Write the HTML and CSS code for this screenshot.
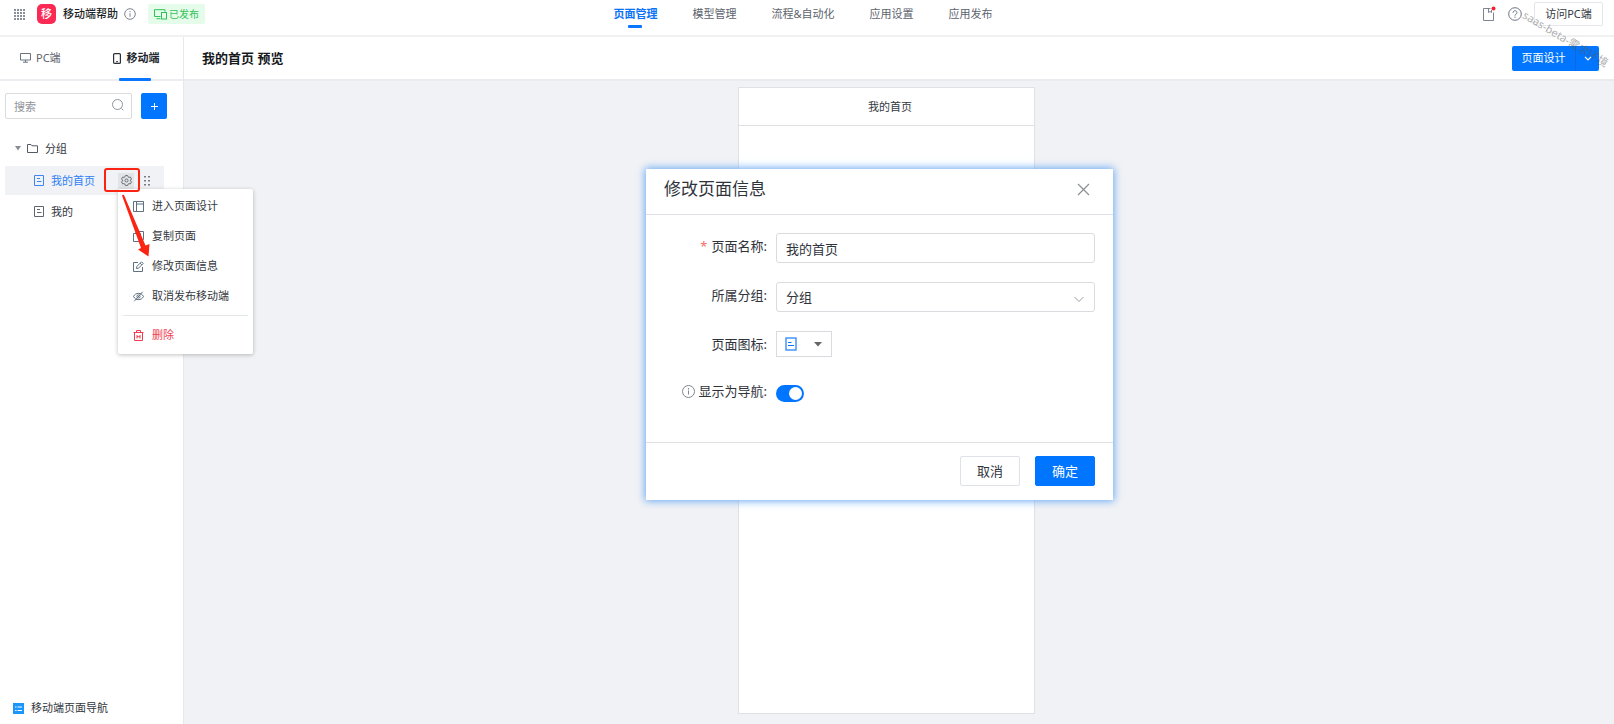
FILE: index.html
```html
<!DOCTYPE html>
<html lang="zh-CN">
<head>
<meta charset="utf-8">
<title>移动端帮助</title>
<link rel="stylesheet" href="styles.css">
</head>
<body>
<div class="app">
  <header class="topbar">
    <div class="brand">
      <svg class="apps" width="11" height="11" viewBox="0 0 11 11" fill="#6b7380"><path d="M0 0h2v2H0zM3 0h2v2H3zM6 0h2v2H6zM9 0h2v2H9zM0 3h2v2H0zM3 3h2v2H3zM6 3h2v2H6zM9 3h2v2H9zM0 6h2v2H0zM3 6h2v2H3zM6 6h2v2H6zM9 6h2v2H9zM0 9h2v2H0zM3 9h2v2H3zM6 9h2v2H6zM9 9h2v2H9z" opacity=".8"/></svg>
      <span class="logo">移</span>
      <span class="brand-name">移动端帮助</span>
      <svg class="info" width="12" height="12" viewBox="0 0 12 12" fill="none" stroke="#7d8592"><circle cx="6" cy="6" r="5.3"/><path d="M6 5.2v3.6M6 3v1.2"/></svg>
      <span class="badge"><svg width="13" height="11" viewBox="0 0 13 11" fill="none" stroke="#2fc25b"><path d="M6.5 7.5h-6v-6.800h10.500v2M2.500 9.700h4"/><rect x="7.500" y="3.500" width="5" height="6.500"/></svg>已发布</span>
    </div>
    <nav class="mainnav">
      <a class="current" href="#">页面管理</a>
      <a href="#">模型管理</a>
      <a href="#">流程&amp;自动化</a>
      <a href="#">应用设置</a>
      <a href="#">应用发布</a>
    </nav>
    <div class="tools">
      <svg width="14" height="16" viewBox="0 0 14 16" fill="none" stroke="#7d8592"><path d="M8.500 2.500h-7v12h10v-8"/><path d="M6.500 2.500v4l1.500-1 1.500 1V4"/><circle cx="11.500" cy="2.500" r="2" fill="#f5222d" stroke="none"/></svg>
      <svg width="14" height="14" viewBox="0 0 14 14" fill="none" stroke="#6b7684"><circle cx="7" cy="7" r="6.300"/><path d="M5 5.800c0-2.700 4-2.700 4-.2C9 7 7 6.900 7 8.600M7 9.600v1.200"/></svg>
      <button class="visit" type="button">访问PC端</button>
    </div>
  </header>

  <div class="body">
    <aside class="sidebar">
      <div class="tabs">
        <button class="tab" type="button"><svg width="11" height="10" viewBox="0 0 11 10" fill="none" stroke="#6b7380"><path d="M.5.500h10v6.500H.5zM5.500 7v2M3 9.200h5"/></svg>PC端</button>
        <button class="tab active" type="button"><svg width="8" height="11" viewBox="0 0 8 11" fill="none" stroke="#2b2f36"><rect x=".6" y=".6" width="6.800" height="9.800" rx="1" stroke-width="1.200"/><path d="M3 8.700h2"/></svg>移动端</button>
      </div>
      <div class="searchrow">
        <div class="search">
          <input type="search" aria-label="搜索" placeholder="搜索">
          <svg width="12" height="12" viewBox="0 0 12 12" fill="none" stroke="#8f949b"><circle cx="5.500" cy="5.500" r="5"/><path d="M9.500 9.500l1.800 1.800"/></svg>
        </div>
        <button class="add" type="button" aria-label="新增"><svg width="9" height="9" viewBox="0 0 9 9" stroke="#fff"><path d="M4.500 1v7M1 4.500h7"/></svg></button>
      </div>
      <ul class="tree">
        <li class="group">
          <svg width="6" height="5" viewBox="0 0 6 5" fill="#888d94"><path d="M0 0h6L3 4.500z"/></svg>
          <svg class="folder" width="11" height="9" viewBox="0 0 11 9" fill="none" stroke="#555b65"><path d="M.5 8.500v-8h3.500l1 1.300h5.500v6.700z"/></svg>
          分组
        </li>
        <li class="item selected">
          <svg width="10" height="11" viewBox="0 0 10 11" fill="none" stroke="#3d87f5"><path d="M.5.500h9v10h-9zM3 3.500h3M3 6.500h4.500"/></svg>
          <a href="#">我的首页</a>
          <button class="gear" type="button" aria-label="设置">
            <svg width="11" height="11" viewBox="0 0 12 12" fill="none" stroke="#5f6670"><path d="M4.800.600h2.400l.5 1.400 1 .6 1.500-.3 1.200 2.100-1 1.100v1l1 1.100-1.200 2.100-1.500-.3-1 .6-.5 1.400H4.800L4.300 10l-1-.6-1.500.3L.6 7.600l1-1.100v-1l-1-1.100 1.200-2.100 1.500.3 1-.6z"/><circle cx="6" cy="6" r="1.700"/></svg>
          </button>
          <svg class="grip" width="6" height="10" viewBox="0 0 6 10" fill="#777d86"><path d="M0 0h2v1.500H0zM4 0h2v1.500H4zM0 4h2v1.500H0zM4 4h2v1.500H4zM0 8h2v1.500H0zM4 8h2v1.500H4z"/></svg>

          <div class="menu">
            <button type="button"><svg width="11" height="11" viewBox="0 0 11 11" fill="none" stroke="#5f7080"><path d="M.5.500h10v10H.5zM3.500.500v10M3.500 3h7"/></svg>进入页面设计</button>
            <button type="button"><svg width="11" height="11" viewBox="0 0 11 11" fill="none" stroke="#5f7080"><path d="M.5 2.500h7v8h-7zM3 2.500v-2h7.500v8h-3"/></svg>复制页面</button>
            <button type="button"><svg width="11" height="11" viewBox="0 0 11 11" fill="none" stroke="#5f7080"><path d="M5 1.500H.5v9h9V6M3.500 7.500l.3-2L8.500.800l1.700 1.700-4.700 4.700zM7.200 2.200l1.600 1.600"/></svg>修改页面信息</button>
            <button type="button"><svg width="11" height="11" viewBox="0 0 11 11" fill="none" stroke="#5f7080"><path d="M.5 5.500C2.500 1.300 8.500 1.300 10.500 5.500 8.500 9.700 2.500 9.700.5 5.500zM9.700.800L1.300 10.200"/><circle cx="5.500" cy="5.500" r="1.600"/></svg>取消发布移动端</button>
            <hr>
            <button class="danger" type="button"><svg width="11" height="11" viewBox="0 0 11 11" fill="none" stroke="#f03e50"><path d="M.5 2.500h10M3.500 2.500v-2h4v2M1.500 2.500v8h8v-8M4 5v3.500M7 5v3.500M4 6.700h3"/></svg>删除</button>
          </div>
          <span class="mark"></span>
          <svg class="arrow" width="30" height="64" viewBox="0 0 30 64" fill="#fb2412"><path d="M1 1.500Q2 0 3.200 1.500L24.500 51.500l4-1.500-1 12.500L17 55.500l3-1.500z"/></svg>
        </li>
        <li class="item">
          <svg width="10" height="11" viewBox="0 0 10 11" fill="none" stroke="#5f6670"><path d="M.5.500h9v10h-9zM3 3.500h3M3 6.500h4.500"/></svg>
          <a href="#">我的</a>
        </li>
      </ul>
      <a class="navlink" href="#"><svg width="11" height="11" viewBox="0 0 11 11"><path fill="#1b96fb" d="M0 0h11v11H0z"/><path stroke="#fff" d="M2 4h1.500M4.500 4H9M2 7.500h1.500M4.500 7.500H9"/></svg>移动端页面导航</a>
    </aside>

    <main class="content">
      <div class="subbar">
        <h1>我的首页 预览</h1>
        <div class="split">
          <button type="button">页面设计</button>
          <button class="more" type="button" aria-label="更多"><svg width="8" height="5" viewBox="0 0 8 5" fill="none" stroke="#fff" stroke-width="1.200"><path d="M1 .8l3 3 3-3"/></svg></button>
        </div>
      </div>
      <div class="stage">
        <section class="phone"><h2>我的首页</h2></section>
        <div class="overlay">
          <form class="dialog" role="dialog" aria-labelledby="dlg-title">
            <div class="dialog-head">
              <h2 id="dlg-title">修改页面信息</h2>
              <button class="close" type="button" aria-label="关闭"><svg width="13" height="13" viewBox="0 0 13 13" stroke="#8c8f94" stroke-width="1.200"><path d="M1 1l11 11M12 1L1 12"/></svg></button>
            </div>
            <div class="fields">
              <label for="page-name"><span class="required">*</span>页面名称:</label>
              <input id="page-name" class="box" type="text" value="我的首页">
              <label for="page-group">所属分组:</label>
              <div class="selectwrap">
                <select id="page-group" class="box"><option>分组</option></select>
                <svg width="12" height="7" viewBox="0 0 12 7" fill="none" stroke="#999da5"><path d="M1.500 1L6 5.500 10.500 1"/></svg>
              </div>
              <label for="page-icon">页面图标:</label>
              <button id="page-icon" class="iconpick" type="button">
                <svg width="12" height="14" viewBox="0 0 12 14" fill="none" stroke="#4497ff"><path d="M1 1h10v12H1z" stroke-width="1.500"/><path d="M3 5.500h3.500M3 8.500h6" stroke="#0b75ff"/></svg>
                <svg width="8" height="5" viewBox="0 0 8 5" fill="#666"><path d="M0 0h8L4 4.500z"/></svg>
              </button>
              <label for="show-nav"><svg width="13" height="13" viewBox="0 0 13 13" fill="none" stroke="#7d8592"><circle cx="6.500" cy="6.500" r="6"/><path d="M6.500 5.500v4M6.500 3v1.500"/></svg>显示为导航:</label>
              <input id="show-nav" class="switch" type="checkbox" checked>
            </div>
            <div class="dialog-foot">
              <button class="btn" type="button">取消</button>
              <button class="btn primary" type="button">确定</button>
            </div>
          </form>
        </div>
      </div>
    </main>
  </div>
  <span class="watermark">saas-beta-需求环境</span>
</div>
</body>
</html>
```

FILE: styles.css
```css
* { box-sizing: border-box; }

body {
  margin: 0;
  font: 11px/16px "Noto Sans", "Noto Sans CJK SC", sans-serif;
  color: #33373e;
  background: #fff;
}

button, input, select { font: inherit; color: inherit; }
button { margin: 0; padding: 0; border: 0; background: none; cursor: pointer; }
a { color: inherit; text-decoration: none; }
h1, h2, ul { margin: 0; padding: 0; font-size: inherit; font-weight: inherit; }
svg { display: block; flex: none; }

.app {
  position: relative;
  display: flex;
  flex-direction: column;
  min-height: 100vh;
}

/* Top bar */
.topbar {
  display: grid;
  grid-template-columns: 1fr auto 1fr;
  height: 37px;
  border-bottom: 2px solid #f0f1f3;
}
.brand { display: flex; align-items: center; height: 28px; padding-left: 14px; }
.logo {
  width: 19px;
  height: 20px;
  margin: 0 7px 0 12px;
  border-radius: 5px;
  background: #fb2a55;
  color: #fff;
  font-weight: 500;
  line-height: 19px;
  text-align: center;
}
.brand-name { color: #1c1f24; font-weight: 500; }
.info { margin: 0 12px 0 6px; }
.badge {
  display: flex;
  align-items: center;
  gap: 2px;
  height: 20px;
  padding: 0 6px;
  border-radius: 2px;
  background: #e6fcea;
  color: #2fc25b;
  font-size: 10px;
}
.mainnav { display: flex; gap: 35px; padding: 6px 8px 0 0; color: #5d636d; }
.mainnav .current { position: relative; color: #0a73f8; font-weight: 700; }
.mainnav .current::after {
  content: "";
  position: absolute;
  left: 15px;
  right: 15px;
  top: 19px;
  height: 3px;
  border-radius: 1px;
  background: #0a75ff;
}
.tools {
  display: flex;
  align-items: center;
  justify-content: flex-end;
  gap: 12px;
  height: 27px;
  padding-right: 11px;
}
.visit {
  width: 69px;
  height: 24px;
  border: 1px solid #e4e6eb;
  border-radius: 2px;
}

/* Sidebar */
.body { display: flex; flex: 1; }
.sidebar {
  display: flex;
  flex-direction: column;
  width: 184px;
  border-right: 1px solid #e6e8ec;
}
.tabs { display: flex; height: 44px; border-bottom: 2px solid #ecedf0; }
.tab {
  display: flex;
  flex: 1;
  align-items: center;
  gap: 5px;
  padding-left: 20px;
  color: #5d636d;
}
.tab.active {
  position: relative;
  gap: 6px;
  padding-left: 22px;
  color: #22262c;
  font-weight: 700;
}
.tab.active::after {
  content: "";
  position: absolute;
  left: 28px;
  bottom: -2px;
  width: 32px;
  height: 3px;
  border-radius: 1px;
  background: #0a75ff;
}
.searchrow { display: flex; gap: 9px; padding: 12px 16px 0 5px; }
.search { position: relative; flex: 1; }
.search input {
  width: 100%;
  height: 26px;
  padding: 0 26px 0 8px;
  border: 1px solid #d9dbdf;
  border-radius: 2px;
  outline: 0;
  appearance: none;
}
.search input::placeholder { color: #8f9298; opacity: 1; }
.search svg { position: absolute; right: 8px; top: 6px; }
.add {
  display: grid;
  place-items: center;
  width: 26px;
  height: 26px;
  border-radius: 2px;
  background: #0075ff;
}
.tree { padding: 15px 19px 0 5px; list-style: none; }
.group, .item { display: flex; align-items: center; height: 29px; margin-bottom: 3px; }
.group { padding-left: 10px; }
.group .folder { margin: 0 7px 0 6px; }
.item { position: relative; gap: 7px; padding-left: 29px; }
.item.selected { margin-bottom: 2px; background: #f1f2f5; color: #2f80f5; }
.gear {
  display: grid;
  place-items: center;
  width: 16px;
  height: 16px;
  margin-left: 16px;
  background: #e2e4e8;
}
.grip { margin-left: 3px; }

.menu {
  position: absolute;
  z-index: 2;
  left: 113px;
  top: 23px;
  width: 135px;
  padding: 2px 5px 4px;
  border-radius: 2px;
  background: #fff;
  box-shadow: 0 1px 4px rgba(0, 0, 0, .25);
  color: #33373e;
}
.menu button {
  display: flex;
  align-items: center;
  gap: 8px;
  width: 100%;
  height: 30px;
  padding-left: 10px;
}
.menu hr { height: 1px; margin: 4px 0; border: 0; background: #e6e7ea; }
.menu .danger { color: #f03e50; }
.mark {
  position: absolute;
  z-index: 3;
  left: 99px;
  top: 2px;
  width: 36px;
  height: 24px;
  border: 2px solid #fb2412;
  border-radius: 3px;
}
.arrow { position: absolute; z-index: 3; left: 116px; top: 28px; }
.navlink {
  display: flex;
  align-items: center;
  gap: 7px;
  margin-top: auto;
  padding: 0 0 8px 13px;
}

/* Preview */
.content { display: flex; flex: 1; flex-direction: column; }
.subbar {
  display: flex;
  align-items: center;
  justify-content: space-between;
  height: 44px;
  padding: 0 15px 0 18px;
  border-bottom: 2px solid #e9ebee;
}
.subbar h1 { color: #16191d; font-size: 13px; font-weight: 700; }
.split { display: flex; color: #fff; }
.split button { width: 63px; height: 25px; border-radius: 2px 0 0 2px; background: #0075ff; }
.split .more {
  display: grid;
  place-items: center;
  width: 24px;
  border-left: 1px solid #1466d6;
  border-radius: 0 2px 2px 0;
}
.stage {
  position: relative;
  display: flex;
  flex: 1;
  justify-content: center;
  padding: 6px 26px 10px 0;
  background: #f1f2f5;
}
.phone { width: 297px; border: 1px solid #dfe1e4; background: #fff; }
.phone h2 {
  padding: 11px 0 10px 8px;
  border-bottom: 1px solid #dfe1e4;
  text-align: center;
}

/* Dialog */
.overlay {
  position: absolute;
  inset: 0;
  display: flex;
  align-items: flex-start;
  justify-content: center;
  padding: 88px 39px 0 0;
}
.dialog {
  width: 467px;
  background: #fff;
  box-shadow: 0 0 8px 1px #67a8f5;
  color: #2f333b;
  font-size: 13px;
  line-height: 20px;
}
.dialog-head {
  display: flex;
  align-items: center;
  justify-content: space-between;
  height: 46px;
  padding: 0 23px 5px 18px;
  border-bottom: 1px solid #dfe1e8;
}
.dialog-head h2 { font-size: 17px; line-height: 24px; }
.fields {
  display: grid;
  grid-template-columns: 121px 1fr;
  grid-template-rows: 30px 30px 30px 26px;
  gap: 19px 9px;
  padding: 18px 18px 36px 0;
}
.fields label {
  display: flex;
  align-items: center;
  justify-content: flex-end;
  height: 26px;
}
.fields label:last-of-type { height: 22px; gap: 4px; }
.required { margin-right: 4px; color: #f56c6c; }
.box {
  width: 100%;
  height: 30px;
  padding: 0 9px;
  border: 1px solid #d9dbdf;
  border-radius: 3px;
  outline: 0;
  background: #fff;
  appearance: none;
}
.selectwrap { position: relative; }
.selectwrap svg { position: absolute; right: 10px; top: 14px; }
.iconpick {
  display: flex;
  align-items: center;
  justify-content: space-between;
  width: 56px;
  height: 26px;
  padding: 0 9px 0 8px;
  border: 1px solid #d9dbdf;
}
.switch {
  align-self: center;
  width: 28px;
  height: 17px;
  margin: 0;
  padding: 2px;
  border-radius: 9px;
  background: #0075ff;
  appearance: none;
}
.switch::before {
  content: "";
  display: block;
  width: 13px;
  height: 13px;
  margin-left: auto;
  border-radius: 50%;
  background: #fff;
}
.dialog-foot {
  display: flex;
  justify-content: flex-end;
  gap: 15px;
  padding: 13px 18px 14px;
  border-top: 1px solid #dfe1e4;
}
.btn {
  width: 60px;
  height: 30px;
  border: 1px solid #dfe1e8;
  border-radius: 2px;
}
.btn.primary { border-color: #0075ff; background: #0075ff; color: #fff; }

.watermark {
  position: absolute;
  z-index: 5;
  right: 0;
  top: 31px;
  color: rgba(90, 90, 90, .5);
  font-size: 11px;
  white-space: nowrap;
  transform: rotate(31deg);
  pointer-events: none;
}
```
